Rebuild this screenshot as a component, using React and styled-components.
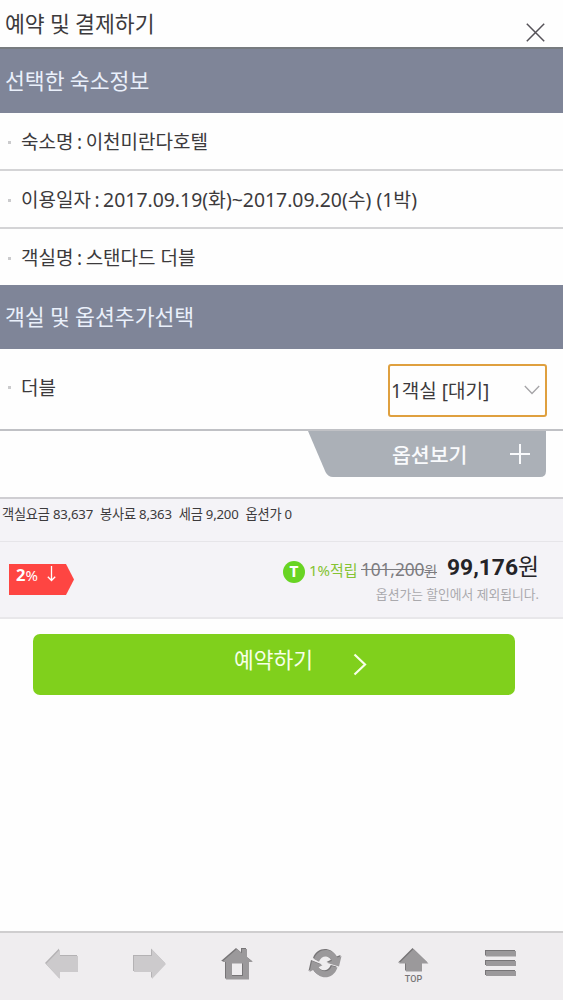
import React, { useState } from "react";
import styled, { createGlobalStyle } from "styled-components";

const GlobalStyle = createGlobalStyle`
 * {
  box-sizing: border-box;
 }
 body {
  margin: 0;
  background: #fefefe;
  color: #3c3a3c;
  font-family: "Noto Sans", "Noto Sans CJK KR", sans-serif;
 }
`;

const Page = styled.div`
 display: flex;
 flex-direction: column;
 height: 1000px;
 overflow: hidden;
`;

const Header = styled.header`
 display: flex;
 justify-content: space-between;
 height: 49px;
 padding: 0 18px 0 5px;
 border-bottom: 2px solid #777b7f;
`;

const Title = styled.h1`
 margin: 0;
 font-size: 21.6px;
 font-weight: 400;
 line-height: 47px;
 word-spacing: -0.4px;
 white-space: nowrap;
`;

const CloseButton = styled.button`
 display: flex;
 padding: 23px 0 0;
 border: 0;
 background: none;
`;

const SectionTitle = styled.h2`
 height: 64px;
 margin: 0;
 padding-left: 5px;
 background: #7f8598;
 color: #eaf0fb;
 font-size: 21.6px;
 font-weight: 400;
 line-height: 64px;
 word-spacing: -0.4px;
 white-space: nowrap;
`;

const InfoRow = styled.div`
 display: flex;
 align-items: center;
 height: ${(props) => props.$height}px;
 padding: 2px 16px 0 8px;
 border-bottom: ${(props) => (props.$last ? "0" : "2px solid #d4d4d6")};
 font-size: 19px;
 white-space: nowrap;

 &::before {
  content: "";
  width: 3px;
  height: 3px;
  margin-right: 10px;
  background: #cbcbcd;
 }
`;

const InfoText = styled.span`
 line-height: 28px;
 word-spacing: -1.4px;
`;

const InfoValue = styled.span`
 font-size: ${(props) => props.$size || 19}px;
 word-spacing: 0;
`;

const RoomRow = styled(InfoRow)`
 border-bottom: 2px solid #c0c1c5;
 padding-top: 0;
 padding-bottom: 3px;
`;

const RoomSelect = styled.div`
 display: flex;
 align-items: center;
 justify-content: space-between;
 width: 159px;
 height: 53px;
 margin: 5px 0 0 auto;
 padding: 0 5px 1px 1px;
 border: 2px solid #dfa03f;
 border-radius: 3px;
`;

const OptionArea = styled.div`
 display: flex;
 justify-content: flex-end;
 height: 66px;
 padding-right: 16px;
`;

const OptionButton = styled.button`
 display: grid;
 width: 240px;
 height: 46px;
 padding: 0;
 border: 0;
 background: none;
 color: #f9fafc;
 font: inherit;

 > * {
  grid-area: 1 / 1;
 }
`;

const OptionLabel = styled.span`
 display: flex;
 align-items: center;
 justify-content: space-between;
 padding: 0 17px 1px 85px;
 font-size: 20.5px;
 font-weight: 500;
`;

const PriceDetails = styled.div`
 display: flex;
 gap: 7px;
 height: 45px;
 padding: 4px 0 0 2px;
 border-top: 2px solid #cfced2;
 border-bottom: 1px solid #e6e5e9;
 background: #f4f3f7;
 font-size: 13.2px;
 line-height: 22px;
 letter-spacing: -0.2px;
 white-space: nowrap;
`;

const PriceTotal = styled.div`
 display: flex;
 justify-content: space-between;
 height: 77px;
 padding: 0 24px 0 9px;
 border-bottom: 2px solid #e8e7ea;
 background: #f4f3f7;
`;

const DiscountTag = styled.div`
 display: flex;
 width: 65px;
 height: 31px;
 margin-top: 22px;
 padding-left: 7px;
 background: #fe4542;
 clip-path: polygon(0 0, 57px 0, 100% 50%, 57px 100%, 0 100%);
 color: #fff;
 font-size: 15px;
 line-height: 22px;

 b {
  font-size: 16.5px;
 }
 svg {
  margin: 2px 0 0 9px;
 }
`;

const PriceArea = styled.div`
 display: flex;
 flex-direction: column;
 align-items: flex-end;
 white-space: nowrap;
`;

const PriceLine = styled.div`
 display: flex;
 align-items: center;
 height: 41px;
 padding-top: 9px;
`;

const PointBadge = styled.span`
 width: 22px;
 height: 22px;
 margin: 9px 4px 0 0;
 border-radius: 50%;
 background: #68d423;
 color: #fff;
 font: 900 14px/22px Roboto, sans-serif;
 text-align: center;
`;

const PointRate = styled.span`
 width: 49px;
 margin: 4px 3px 0 0;
 color: #84c332;
 font-size: 15px;
`;

const OldPrice = styled.del`
 width: 77px;
 margin: 4px 9px 0 0;
 color: #7d7c80;
 font-size: 17.3px;
 letter-spacing: -0.1px;

 small {
  font-size: 14px;
 }
`;

const FinalPrice = styled.span`
 width: 92px;
 color: #242327;
 font-size: 22.8px;
 line-height: 32px;

 b {
  font-family: Roboto, sans-serif;
  font-weight: 700;
 }
`;

const Note = styled.p`
 margin: 0;
 color: #aaa9ad;
 font-size: 12.8px;
 line-height: 22px;
`;

const ReserveButton = styled.button`
 display: flex;
 justify-content: center;
 width: 482px;
 height: 61px;
 margin: 15px 0 0 33px;
 padding: 0 0 0 53px;
 border: 0;
 border-radius: 7px;
 background: #80d01c;
 color: #f7ffe8;
 font: inherit;
 font-size: 21.5px;
 line-height: 52px;

 svg {
  margin: 19px 0 0 40px;
 }
`;

const BottomNav = styled.nav`
 display: flex;
 height: 69px;
 margin-top: auto;
 padding: 13px 0 0 18px;
 border-top: 2px solid #cfcecf;
 background: #efedef;
`;

const NavButton = styled.button`
 display: flex;
 justify-content: center;
 width: 87.7px;
 padding: 0;
 border: 0;
 background: none;
`;

const NavSvg = styled.svg`
 width: 36px;
 height: 38px;
 fill: ${(props) => (props.$disabled ? "#cccacc" : "#9b999b")};

 g {
  filter: drop-shadow(-0.5px -0.7px 0 ${(props) => (props.$disabled ? "#b4b2b4" : "#777577")});
 }
 text {
  fill: #777577;
  font: 500 9px Roboto, sans-serif;
 }
`;

const infos = [
 { label: "숙소명 :", value: "이천미란다호텔", height: 58 },
 { label: "이용일자 :", value: "2017.09.19(화)~2017.09.20(수) (1박)", size: 19.4, height: 58 },
 { label: "객실명 :", value: "스탠다드 더블", height: 56 },
];

const prices = ["객실요금 83,637", "봉사료 8,363", "세금 9,200", "옵션가 0"];

const navItems = [
 {
  name: "back",
  disabled: true,
  icon: <path d="M2 18 16 3.5V10H34V26H16V33Z" />,
 },
 {
  name: "forward",
  disabled: true,
  icon: <path d="M34 18 20 3.5V10H2V26H20V33Z" />,
 },
 {
  name: "home",
  icon: (
   <path
    fillRule="evenodd"
    d="M3 16 18 3 23 7.2V3H28V11.3L34 16H30V33.5H7V16ZM13 17.5V30H24V17.5Z"
   />
  ),
 },
 {
  name: "refresh",
  icon: (
   <>
    <path d="M7 13C11 1.5 25 1.2 30.5 11.5L34.5 10 32 20.5 20.5 17 25 14.8C22 9 14.5 8.6 12 15.8Z" />
    <path d="M30.5 21.5C26 34.5 12 34 6.5 23.8L2.5 26 5 15 15.5 19.3 11.5 21.3C15 27 22.5 26.5 24.8 20Z" />
   </>
  ),
 },
 {
  name: "top",
  icon: <path d="M18.5 3 33.5 17.5H27V25.5H11V17.5H4Z" />,
  caption: "TOP",
 },
 {
  name: "menu",
  icon: <path d="M4 5H34V10.5H4ZM4 15H34V20H4ZM4 25H34V30H4Z" />,
 },
];

export default function App() {
 const [room] = useState("1객실 [대기]");

 return (
  <>
   <GlobalStyle />
   <Page>
    <Header>
     <Title>예약 및 결제하기</Title>
     <CloseButton aria-label="닫기">
      <svg width="19" height="19" fill="none" stroke="#555258" strokeWidth="1.5">
       <path d="M.8.8 18.2 18.2M18.2.8.8 18.2" />
      </svg>
     </CloseButton>
    </Header>

    <SectionTitle>선택한 숙소정보</SectionTitle>
    {infos.map((info, index) => (
     <InfoRow key={index} $height={info.height} $last={index === 2}>
      <InfoText>
       {info.label} <InfoValue $size={info.size}>{info.value}</InfoValue>
      </InfoText>
     </InfoRow>
    ))}

    <SectionTitle>객실 및 옵션추가선택</SectionTitle>
    <RoomRow $height={82}>
     <InfoText>더블</InfoText>
     <RoomSelect>
      {room}
      <svg width="16" height="10" fill="none" stroke="#a5a4a7" strokeWidth="1.3">
       <path d="M.8 1 8 8.5 15.2 1" />
      </svg>
     </RoomSelect>
    </RoomRow>
    <OptionArea>
     <OptionButton>
      <svg width="240" height="46" fill="#abb0b7">
       <path d="M1 0H239V40Q239 46 233 46H26Q21 46 18.5 41Z" />
      </svg>
      <OptionLabel>
       옵션보기
       <svg width="20" height="20" stroke="currentColor" strokeWidth="2">
        <path d="M10 0V20M0 10H20" />
       </svg>
      </OptionLabel>
     </OptionButton>
    </OptionArea>

    <PriceDetails>
     {prices.map((price) => (
      <span key={price}>{price}</span>
     ))}
    </PriceDetails>
    <PriceTotal>
     <DiscountTag>
      <b>2</b>%
      <svg width="9" height="16" fill="none" stroke="#fff" strokeWidth="1.3">
       <path d="M4.5 0V14.5M.8 10.8 4.5 14.5 8.2 10.8" />
      </svg>
     </DiscountTag>
     <PriceArea>
      <PriceLine>
       <PointBadge>T</PointBadge>
       <PointRate>1%적립</PointRate>
       <OldPrice>
        101,200<small>원</small>
       </OldPrice>
       <FinalPrice>
        <b>99,176</b>원
       </FinalPrice>
      </PriceLine>
      <Note>옵션가는 할인에서 제외됩니다.</Note>
     </PriceArea>
    </PriceTotal>

    <ReserveButton>
     예약하기
     <svg width="14" height="23" fill="none" stroke="currentColor" strokeWidth="2.2">
      <path d="M1.5 1.5 12 11.5 1.5 21.5" />
     </svg>
    </ReserveButton>

    <BottomNav>
     {navItems.map((item) => (
      <NavButton key={item.name} aria-label={item.name}>
       <NavSvg viewBox="0 0 36 38" $disabled={item.disabled}>
        <g>{item.icon}</g>
        {item.caption && (
         <text x="18.5" y="35.5" textAnchor="middle">
          {item.caption}
         </text>
        )}
       </NavSvg>
      </NavButton>
     ))}
    </BottomNav>
   </Page>
  </>
 );
}
